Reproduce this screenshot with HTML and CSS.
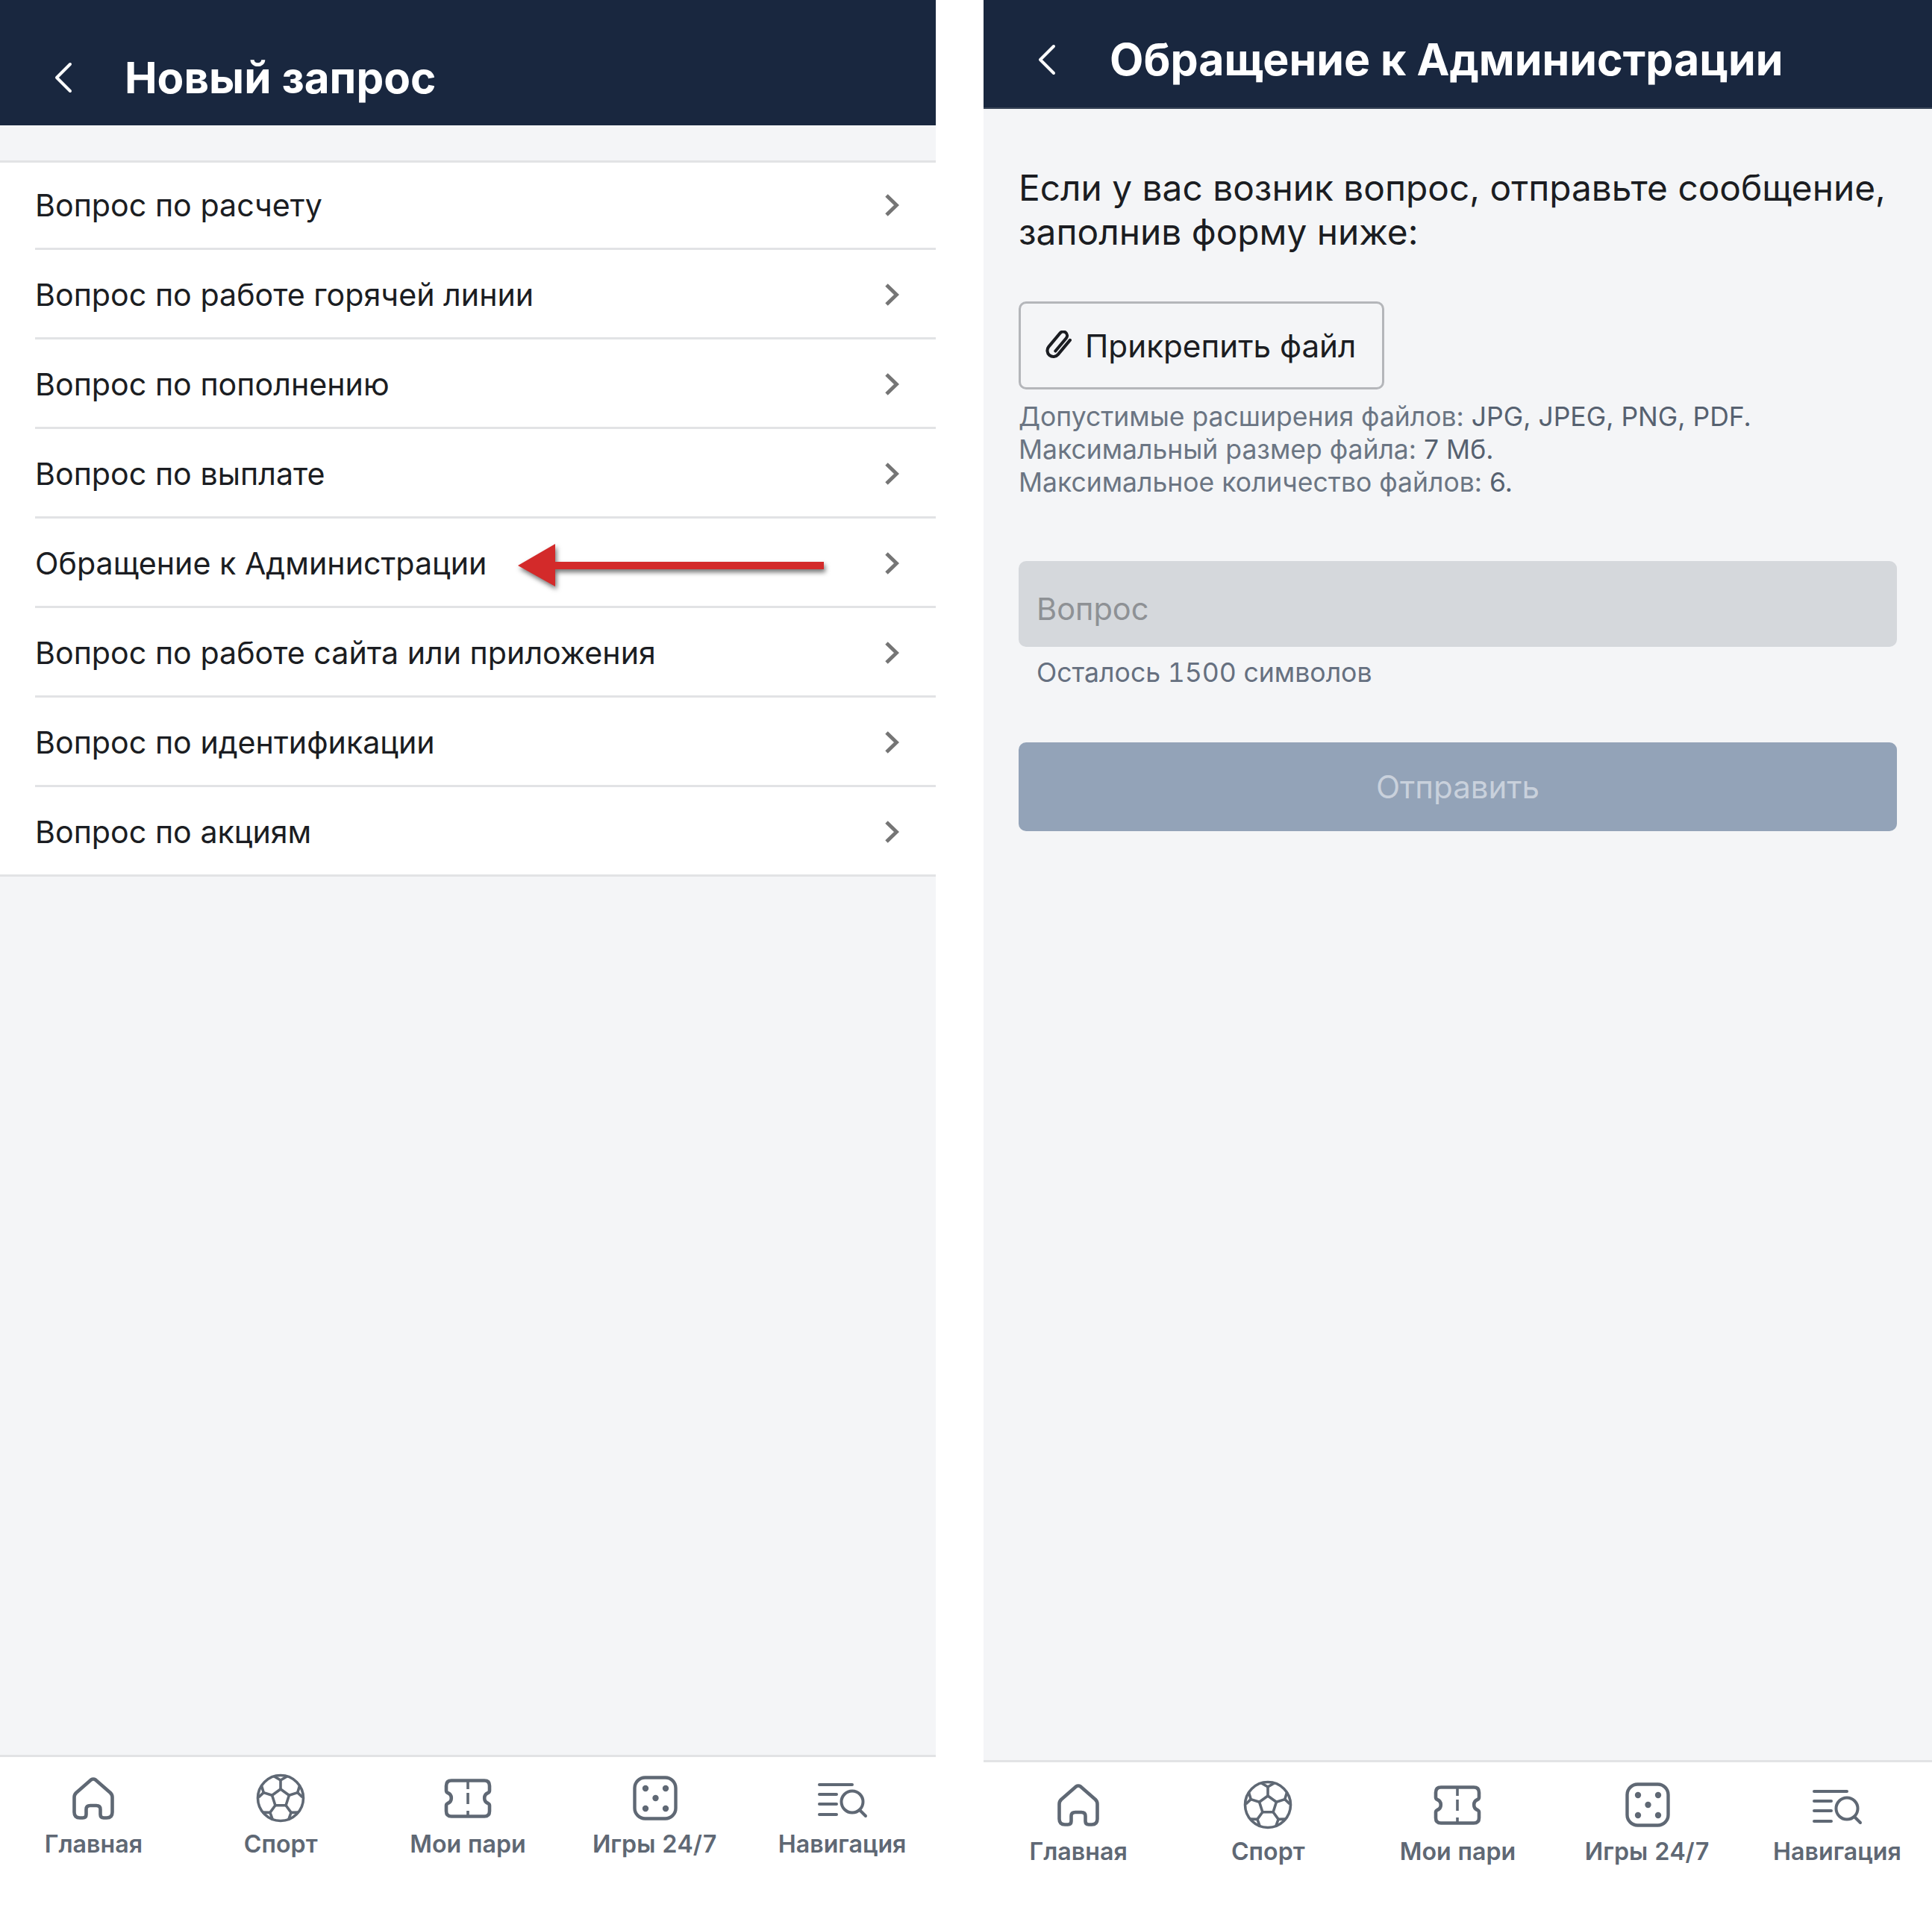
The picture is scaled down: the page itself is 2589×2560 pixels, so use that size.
FILE: index.html
```html
<!DOCTYPE html>
<html lang="ru">
<head>
<meta charset="utf-8">
<title>Запрос</title>
<link rel="stylesheet" href="styles.css">
</head>
<body>
<svg class="sprite" aria-hidden="true">
  <defs>
    <symbol id="i-chev" viewBox="0 0 20 32"><polyline points="3,3 16.5,16 3,29" fill="none" stroke="currentColor" stroke-width="5"/></symbol>
    <symbol id="i-back" viewBox="0 0 26 42"><polyline points="22,3 4,21 22,39" fill="none" stroke="currentColor" stroke-width="4" stroke-linecap="round" stroke-linejoin="round"/></symbol>
    <symbol id="i-home" viewBox="0 0 72 72"><path d="M33 11.5Q36 9.5 39 11.5L59 29Q61.5 31.5 61.5 35V55Q61.5 62.5 54 62.5H50Q45.5 62.5 45.5 58V51Q45.5 46 40 46H32Q26.5 46 26.5 51V58Q26.5 62.5 22 62.5H18Q10.5 62.5 10.5 55V35Q10.5 31.5 13 29Z" fill="none" stroke="currentColor" stroke-width="4.6" stroke-linejoin="round"/></symbol>
    <symbol id="i-ball" viewBox="0 0 72 72"><g fill="none" stroke="currentColor" stroke-width="3.6" stroke-linejoin="round"><circle cx="36" cy="36" r="30.5"/><polygon points="36,24 47.4,32.3 43.1,45.7 28.9,45.7 24.6,32.3"/><path d="M36 24V12M47.4 32.3L58.8 28.6M43.1 45.7L50.1 55.4M28.9 45.7L21.9 55.4M24.6 32.3L13.2 28.6"/><path d="M27.5 7L36 12L44.5 7M61.7 18.7L58.8 28.6L65.5 35M60.4 55.1L50.1 55.4L46.6 65M25.4 65L21.9 55.4L11.6 55.1M6.5 35L13.2 28.6L10.3 18.7"/></g></symbol>
    <symbol id="i-ticket" viewBox="0 0 72 72"><path d="M14 12.5H58Q65 12.5 65 19.5V26Q65 28 63 29A7.5 7.5 0 0 0 63 43Q65 44 65 46V53.5Q65 60.5 58 60.5H14Q7 60.5 7 53.5V46Q7 44 9 43A7.5 7.5 0 0 0 9 29Q7 28 7 26V19.5Q7 12.5 14 12.5Z" fill="none" stroke="currentColor" stroke-width="4.6" stroke-linejoin="round"/><path d="M36 12V24M36 29V44M36 53V61" fill="none" stroke="currentColor" stroke-width="3.6"/></symbol>
    <symbol id="i-dice" viewBox="0 0 72 72"><rect x="8.5" y="8.5" width="55" height="55" rx="14" fill="none" stroke="currentColor" stroke-width="4.4"/><g fill="currentColor"><circle cx="23" cy="23" r="4.2"/><circle cx="50" cy="23" r="4.2"/><circle cx="36.5" cy="36" r="4.2"/><circle cx="23" cy="50" r="4.2"/><circle cx="50" cy="50" r="4.2"/></g></symbol>
    <symbol id="i-nav" viewBox="0 0 72 72"><g fill="none" stroke="currentColor" stroke-width="4" stroke-linecap="round"><path d="M5 18H49M5 31H28M5 44H28M5 58H28"/><circle cx="49" cy="41" r="14.5"/><path d="M59 52L67 60"/></g></symbol>
  </defs>
</svg>

<div class="screens">
  <section class="phone phone-list">
    <header class="topbar">
      <svg class="back"><use href="#i-back"/></svg>
      <h1 class="title">Новый запрос</h1>
    </header>
    <main class="content content-list">
      <ul class="rows">
        <li class="row"><span>Вопрос по расчету</span><svg class="chev"><use href="#i-chev"/></svg></li>
        <li class="row"><span>Вопрос по работе горячей линии</span><svg class="chev"><use href="#i-chev"/></svg></li>
        <li class="row"><span>Вопрос по пополнению</span><svg class="chev"><use href="#i-chev"/></svg></li>
        <li class="row"><span>Вопрос по выплате</span><svg class="chev"><use href="#i-chev"/></svg></li>
        <li class="row row-marked"><span>Обращение к Администрации</span>
          <svg class="arrow" viewBox="0 0 420 70"><polygon points="4,33 54,4 54,28 414,28 414,38 54,38 54,61" fill="#d32a2a"/></svg>
          <svg class="chev"><use href="#i-chev"/></svg></li>
        <li class="row"><span>Вопрос по работе сайта или приложения</span><svg class="chev"><use href="#i-chev"/></svg></li>
        <li class="row"><span>Вопрос по идентификации</span><svg class="chev"><use href="#i-chev"/></svg></li>
        <li class="row"><span>Вопрос по акциям</span><svg class="chev"><use href="#i-chev"/></svg></li>
      </ul>
    </main>
    <nav class="tabbar">
      <div class="tab"><svg class="tab-icon"><use href="#i-home"/></svg><span>Главная</span></div>
      <div class="tab"><svg class="tab-icon"><use href="#i-ball"/></svg><span>Спорт</span></div>
      <div class="tab"><svg class="tab-icon"><use href="#i-ticket"/></svg><span>Мои пари</span></div>
      <div class="tab"><svg class="tab-icon"><use href="#i-dice"/></svg><span>Игры 24/7</span></div>
      <div class="tab"><svg class="tab-icon"><use href="#i-nav"/></svg><span>Навигация</span></div>
    </nav>
  </section>

  <section class="phone phone-form">
    <header class="topbar">
      <svg class="back"><use href="#i-back"/></svg>
      <h1 class="title">Обращение к Администрации</h1>
    </header>
    <main class="content content-form">
      <p class="intro">Если у вас возник вопрос, отправьте сообщение, заполнив форму ниже:</p>
      <button class="attach" type="button">
        <svg class="clip" viewBox="5 4 30 32"><g transform="rotate(40 20 20)"><path d="M25.5 8V28A6.5 6.5 0 0 1 12.5 28V9A4.2 4.2 0 0 1 21 9V27" fill="none" stroke="currentColor" stroke-width="3.3" stroke-linecap="round"/></g></svg>
        <span>Прикрепить файл</span>
      </button>
      <p class="hint">Допустимые расширения файлов: <span class="hint-value">JPG, JPEG, PNG, PDF.</span><br>Максимальный размер файла: <span class="hint-value">7 Мб.</span><br>Максимальное количество файлов: <span class="hint-value">6.</span></p>
      <div class="field">Вопрос</div>
      <p class="counter">Осталось 1500 символов</p>
      <button class="submit" type="button">Отправить</button>
    </main>
    <nav class="tabbar">
      <div class="tab"><svg class="tab-icon"><use href="#i-home"/></svg><span>Главная</span></div>
      <div class="tab"><svg class="tab-icon"><use href="#i-ball"/></svg><span>Спорт</span></div>
      <div class="tab"><svg class="tab-icon"><use href="#i-ticket"/></svg><span>Мои пари</span></div>
      <div class="tab"><svg class="tab-icon"><use href="#i-dice"/></svg><span>Игры 24/7</span></div>
      <div class="tab"><svg class="tab-icon"><use href="#i-nav"/></svg><span>Навигация</span></div>
    </nav>
  </section>
</div>
</body>
</html>
```
FILE: styles.css
```css
* { box-sizing: border-box; }
html, body { margin: 0; padding: 0; background: #fff; }
body { font-family: Inter, "Noto Sans", sans-serif; color: #1b1d22; }
.sprite { display: none; }

.screens { display: flex; gap: 64px; width: 2589px; height: 2560px; }
.phone { display: flex; flex-direction: column; height: 2560px; }
.phone-list { width: 1254px; }
.phone-form { width: 1271px; }

.topbar { display: flex; align-items: center; background: #19273f; color: #fff; }
.phone-list .topbar { height: 168px; padding: 40px 0 0 72px; gap: 69px; }
.phone-form .topbar { height: 146px; padding: 15px 0 0 72px; gap: 71px; border-bottom: 2px solid #3a4659; }
.back { width: 26px; height: 42px; flex: none; }
.title { margin: 0; line-height: 64px; font-weight: 700; }
.phone-list .title { font-size: 58.4px; }
.phone-form .title { font-size: 59px; }

.content { flex: 1; background: #f4f5f7; }
.content-list { padding-top: 47px; }
.rows { list-style: none; margin: 0; padding: 0 0 0 47px; background: #fff; border-top: 3px solid #e2e3e5; border-bottom: 3px solid #e2e3e5; }
.row { display: flex; align-items: center; justify-content: space-between; position: relative; height: 120px; padding: 3px 49px 0 0; font-size: 41.2px; border-bottom: 3px solid #e2e3e5; }
.row:first-child { height: 117px; padding-top: 0; }
.row:last-child { border-bottom: 0; height: 117px; }
.chev { width: 20px; height: 32px; color: #757575; flex: none; }
.arrow { position: absolute; left: 643px; top: 30px; width: 420px; height: 70px; filter: drop-shadow(2px 4px 3px rgba(0, 0, 0, 0.55)); }

.content-form { padding: 77px 47px 0 47px; }
.intro { margin: 0; font-size: 47.8px; line-height: 59px; }
.attach { display: flex; align-items: center; gap: 15px; margin-top: 63px; width: 490px; height: 118px; padding: 0 0 0 31px; background: transparent; border: 3px solid #b4b6ba; border-radius: 10px; font: inherit; font-size: 42.2px; color: inherit; }
.clip { width: 40px; height: 40px; flex: none; }
.hint { margin: 15px 0 0; font-size: 35.5px; line-height: 44px; color: #6b7583; }
.hint-value { color: #566170; }
.field { margin-top: 83px; height: 115px; padding: 31px 24px 0; background: #d5d8dc; border-radius: 10px; font-size: 41.5px; line-height: 66px; color: #8e9195; }
.counter { margin: 13px 0 0 24px; font-size: 35.6px; line-height: 44px; color: #667080; font-variant-numeric: tabular-nums; }
.submit { display: block; width: 100%; height: 119px; margin-top: 71px; padding: 0; background: #93a3b8; border: 0; border-radius: 10px; font: inherit; font-size: 42px; color: #c9d1dc; }

.tabbar { display: grid; grid-template-columns: repeat(5, 1fr); background: #fff; border-top: 3px solid #e2e3e5; }
.phone-list .tabbar { height: 208px; padding-top: 19px; }
.phone-form .tabbar { height: 201px; padding-top: 21px; }
.tab { display: flex; flex-direction: column; align-items: center; color: #5f6874; font-size: 32.2px; line-height: 40px; font-weight: 600; white-space: nowrap; font-variant-numeric: tabular-nums; }
.tab-icon { width: 72px; height: 72px; }
.phone-list .tab-icon { margin-bottom: 6px; }
.phone-form .tab-icon { margin-bottom: 7px; }
```
